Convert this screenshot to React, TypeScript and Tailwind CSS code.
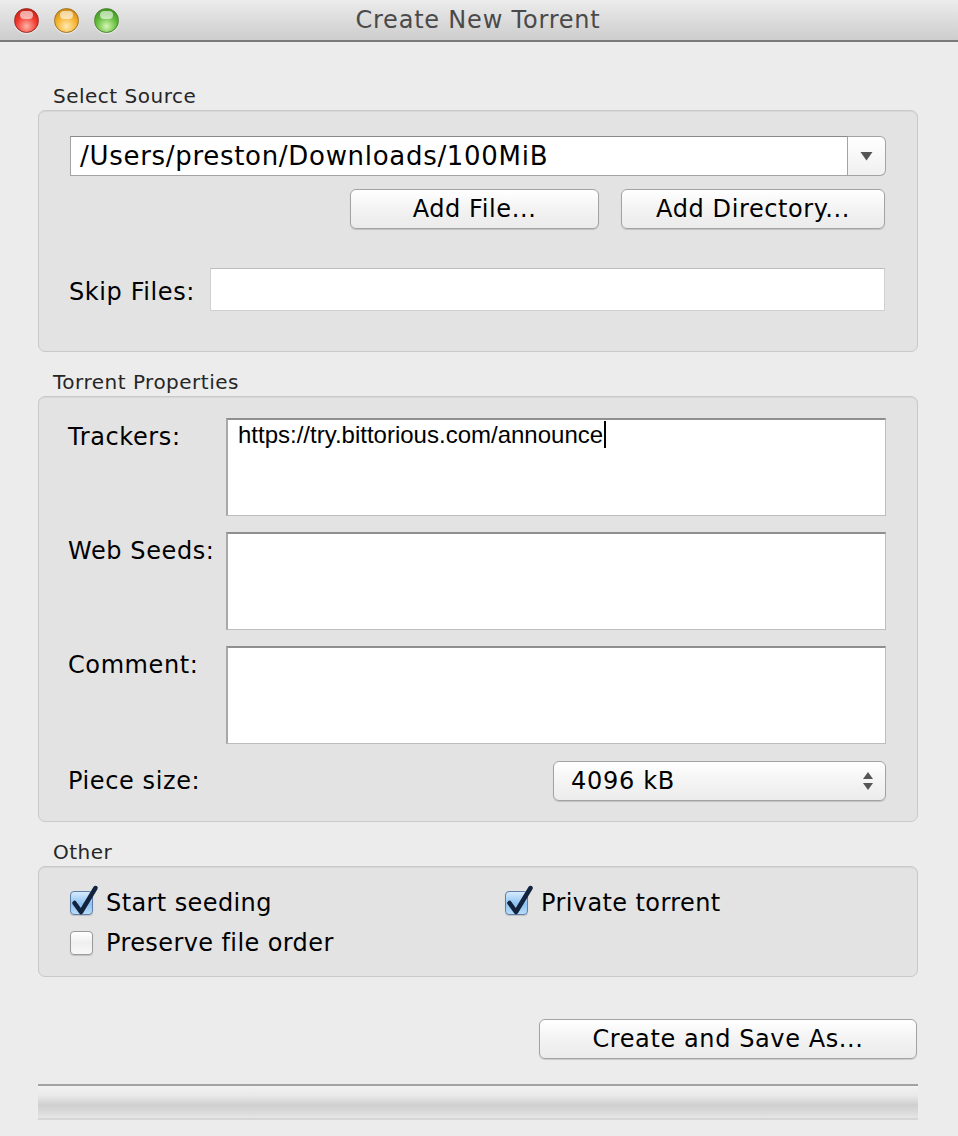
const font = "font-['DejaVu_Sans',sans-serif]";

function TrafficLight({ color }: { color: "red" | "yellow" | "green" }) {
  const fills = {
    red: "bg-[radial-gradient(circle_at_50%_75%,#ffb3a8_0%,#f2382c_50%,#b3140c_100%)] border-[#9a2a22]",
    yellow: "bg-[radial-gradient(circle_at_50%_75%,#ffe9b0_0%,#f5b12c_50%,#b9760b_100%)] border-[#a2741c]",
    green: "bg-[radial-gradient(circle_at_50%_75%,#d6f7b4_0%,#62bb3a_50%,#2f7f17_100%)] border-[#4a8a2a]",
  };
  return (
    <div className={`relative w-[25px] h-[25px] rounded-full border ${fills[color]} shadow-[0_1px_1px_rgba(255,255,255,0.6)]`}>
      <div className="absolute left-[5px] top-[2px] w-[13px] h-[8px] rounded-full bg-white/60" />
    </div>
  );
}

function PushButton({ label, className = "" }: { label: string; className?: string }) {
  return (
    <button
      className={`h-[40px] rounded-[6px] border border-[#a3a3a3] bg-[linear-gradient(#ffffff,#f1f1f1_60%,#ebebeb)] shadow-[0_1px_1px_rgba(0,0,0,0.15)] text-[24px] tracking-[0.6px] text-black ${className}`}
    >
      {label}
    </button>
  );
}

function GroupTitle({ label, className = "" }: { label: string; className?: string }) {
  return (
    <div className={`h-[28px] pl-[15px] flex items-center text-[20px] tracking-[0.5px] text-[#262626] ${className}`}>
      {label}
    </div>
  );
}

function Box({ children, className = "" }: { children: React.ReactNode; className?: string }) {
  return (
    <div
      className={`rounded-[7px] border border-[#c9c9c9] bg-[#e3e3e3] shadow-[inset_0_1px_1px_rgba(0,0,0,0.06)] ${className}`}
    >
      {children}
    </div>
  );
}

function TextArea({ text }: { text?: string }) {
  return (
    <div className="flex-1 h-[98px] bg-white border border-[#bdbdbd] border-t-[#8f8f8f] border-t-2 border-l-2 border-l-[#a9a9a9] px-[10px] pt-[1px]">
      {text && (
        <span className="font-['Liberation_Sans',sans-serif] text-[24px] text-black leading-[28px] border-r-2 border-black pr-[1px]">
          {text}
        </span>
      )}
    </div>
  );
}

function FieldLabel({ label }: { label: string }) {
  return (
    <div className="w-[158px] shrink-0 pt-[5px] h-[28px] leading-[28px] text-[24px] tracking-[0.6px] text-black box-content">
      {label}
    </div>
  );
}

function CheckBox({ checked, label }: { checked: boolean; label: string }) {
  return (
    <div className="flex items-center h-[40px]">
      <div className="relative w-[23px] h-[24px] mr-[13px]">
        <div
          className={`w-[23px] h-[24px] rounded-[4px] border ${
            checked
              ? "border-[#5f7fa8] bg-[linear-gradient(#d6ebfc,#8ec3f2_55%,#b7dcf8)]"
              : "border-[#9a9a9a] bg-[linear-gradient(#ffffff,#efefef_50%,#f8f8f8)]"
          } shadow-[0_1px_1px_rgba(0,0,0,0.15)]`}
        />
        {checked && (
          <svg
            className="absolute -top-[7px] left-0"
            width="30"
            height="32"
            viewBox="0 0 30 32"
          >
            <path
              d="M4.5 19 L11 28 L25.5 4"
              fill="none"
              stroke="#14233d"
              strokeWidth="4.5"
              strokeLinecap="round"
              strokeLinejoin="round"
            />
          </svg>
        )}
      </div>
      <span className="text-[24px] tracking-[0.4px] text-black">{label}</span>
    </div>
  );
}

export default function App() {
  return (
    <div className={`w-[958px] h-[1136px] bg-[#ececec] ${font} overflow-hidden`}>
      {/* Title bar */}
      <div className="relative h-[42px] bg-[linear-gradient(#ececec,#d9d9d9_60%,#cdcdcd)] border-b-2 border-[#7a7a7a] flex items-center justify-center">
        <div className="absolute left-[14px] top-[8px] flex gap-[15px]">
          <TrafficLight color="red" />
          <TrafficLight color="yellow" />
          <TrafficLight color="green" />
        </div>
        <span className="text-[24px] tracking-[0.8px] text-[#4a4a4a] -ml-[2px]">Create New Torrent</span>
      </div>

      <div className="pl-[38px] w-[918px]">
        {/* Select Source */}
        <GroupTitle label="Select Source" className="mt-[40px]" />
        <Box className="pt-[25px] pb-[40px] px-[31px]">
          <div className="flex h-[40px]">
            <div className="flex-1 bg-white border border-[#a3a3a3] border-t-[#8a8a8a] flex items-center pl-[9px] text-[26px] tracking-[0.7px] text-black">
              /Users/preston/Downloads/100MiB
            </div>
            <div className="w-[38px] bg-[linear-gradient(#ffffff,#f0f0f0)] border border-l-0 border-[#a3a3a3] rounded-r-[6px] flex items-center justify-center">
              <svg width="13" height="10" viewBox="0 0 13 10">
                <path d="M0.5 1 L12.5 1 L6.5 9.5 Z" fill="#555" />
              </svg>
            </div>
          </div>
          <div className="flex justify-end gap-[22px] mt-[13px]">
            <PushButton label="Add File..." className="w-[249px]" />
            <PushButton label="Add Directory..." className="w-[264px] mr-[1px]" />
          </div>
          <div className="flex items-center mt-[39px]">
            <span className="w-[141px] shrink-0 -ml-[1px] pt-[4px] text-[24px] tracking-[0.6px] text-black">Skip Files:</span>
            <div className="flex-1 mr-[1px] h-[43px] bg-white border border-[#d0d0d0] border-t-[#bcbcbc]" />
          </div>
        </Box>

        {/* Torrent Properties */}
        <GroupTitle label="Torrent Properties" className="mt-[16px]" />
        <Box className="pt-[21px] pb-[20px] pl-[29px] pr-[31px]">
          <div className="flex">
            <FieldLabel label="Trackers:" />
            <TextArea text="https://try.bittorious.com/announce" />
          </div>
          <div className="flex mt-[16px]">
            <FieldLabel label="Web Seeds:" />
            <TextArea />
          </div>
          <div className="flex mt-[16px]">
            <FieldLabel label="Comment:" />
            <TextArea />
          </div>
          <div className="flex items-center justify-between mt-[17px]">
            <span className="text-[24px] tracking-[0.6px] text-black">Piece size:</span>
            <div className="w-[333px] h-[40px] rounded-[6px] border border-[#a3a3a3] bg-[linear-gradient(#ffffff,#f4f4f4_50%,#ececec)] shadow-[0_1px_1px_rgba(0,0,0,0.15)] flex items-center justify-between pl-[17px] pr-[11px]">
              <span className="text-[24px] tracking-[0.7px] text-black">4096 kB</span>
              <svg width="12" height="20" viewBox="0 0 12 20">
                <path d="M6 1 L11 8 L1 8 Z" fill="#555" />
                <path d="M1 12 L11 12 L6 19 Z" fill="#555" />
              </svg>
            </div>
          </div>
        </Box>

        {/* Other */}
        <GroupTitle label="Other" className="mt-[16px]" />
        <Box className="pt-[16px] pb-[13px] pl-[31px]">
          <div className="flex">
            <div className="w-[435px]">
              <CheckBox checked label="Start seeding" />
              <CheckBox checked={false} label="Preserve file order" />
            </div>
            <div>
              <CheckBox checked label="Private torrent" />
            </div>
          </div>
        </Box>

        <div className="flex justify-end mt-[42px]">
          <PushButton label="Create and Save As..." className="w-[378px] mr-[1px]" />
        </div>

        {/* Progress bar */}
        <div className="mt-[25px] h-[36px] border-t-2 border-[#a2a2a2] border-b-2 border-b-[#d6d6d6] bg-[linear-gradient(#f2f2f2,#e9e9e9_30%,#cfcfcf_60%,#dcdcdc_85%,#e6e6e6)]" />
      </div>
    </div>
  );
}
